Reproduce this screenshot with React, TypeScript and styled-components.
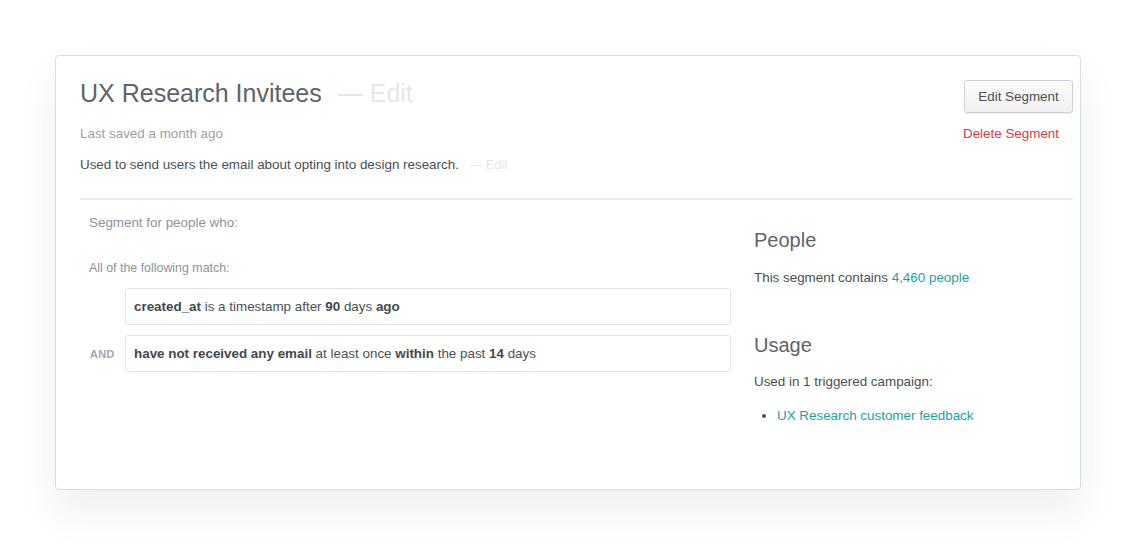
import React from "react";
import styled, { createGlobalStyle } from "styled-components";

const Global = createGlobalStyle`
  html, body { margin: 0; padding: 0; background: #ffffff; }
  body { font-family: "Liberation Sans", Arial, sans-serif; -webkit-font-smoothing: antialiased; }
  * { box-sizing: border-box; }
`;

const Page = styled.div`
  padding: 55px 55px 55px 55px;
`;

const Card = styled.div`
  background: #fff;
  border: 1px solid #d2dfec;
  border-radius: 4px;
  box-shadow: 0 22px 40px rgba(25, 35, 45, 0.075);
  padding: 24px 7px 63px 24px;
`;

const Header = styled.div`
  display: flex;
  justify-content: space-between;
  align-items: flex-start;
  padding-bottom: 23px;
  border-bottom: 2px solid #ebebeb;
`;

const TitleBlock = styled.div`
  display: flex;
  flex-direction: column;
`;

const Title = styled.h1`
  margin: 0;
  font-size: 25px;
  line-height: 26px;
  font-weight: 300;
  color: #5e6469;
`;

const EditHint = styled.span<{ $size: number; $gap: number }>`
  color: #e5e7e9;
  font-size: ${(p) => p.$size}px;
  margin-left: ${(p) => p.$gap}px;
  font-weight: 300;
`;

const Meta = styled.div`
  margin-top: 18px;
  font-size: 13.4px;
  line-height: 20px;
  color: #9a9fa4;
`;

const Description = styled.div`
  margin-top: 11px;
  font-size: 13.4px;
  line-height: 20px;
  color: #4a4f54;
`;

const Actions = styled.div`
  display: flex;
  flex-direction: column;
  align-items: flex-end;
`;

const Button = styled.button`
  width: 109px;
  height: 33px;
  border: 1px solid #cfd1d3;
  border-radius: 3px;
  background: linear-gradient(#fbfbfb, #f1f1f1);
  box-shadow: 0 1px 1px rgba(0, 0, 0, 0.08);
  font-family: inherit;
  font-size: 13.4px;
  color: #4a4f55;
  padding: 0;
  cursor: pointer;
`;

const DangerLink = styled.a`
  margin-top: 11px;
  margin-right: 14px;
  font-size: 13.4px;
  line-height: 20px;
  color: #e4383c;
  text-decoration: none;
`;

const Body = styled.div`
  display: grid;
  grid-template-columns: 651px 1fr;
  column-gap: 23px;
`;

const LeftCol = styled.div`
  padding-top: 13px;
`;

const SectionLabel = styled.div`
  padding-left: 9px;
  font-size: 13.4px;
  line-height: 20px;
  color: #8d9399;
`;

const MatchLabel = styled.div`
  margin-top: 26px;
  padding-left: 9px;
  font-size: 12.4px;
  line-height: 18px;
  color: #8d9399;
`;

const Conditions = styled.div`
  margin-top: 11px;
  display: flex;
  flex-direction: column;
  gap: 10px;
`;

const ConditionRow = styled.div`
  display: grid;
  grid-template-columns: 45px 1fr;
  align-items: center;
`;

const Joiner = styled.span`
  padding-left: 10px;
  font-size: 11px;
  font-weight: 700;
  color: #a3a8ad;
  letter-spacing: 0.2px;
`;

const ConditionBox = styled.div`
  height: 37px;
  display: flex;
  align-items: center;
  padding-left: 8px;
  border: 1px solid #e2e4e6;
  border-radius: 3px;
  font-size: 13.4px;
  color: #4a4f55;
  b { font-weight: 700; color: #43484d; }
`;

const RightCol = styled.div`
  padding-top: 28px;
`;

const Heading = styled.h2<{ $top?: number }>`
  margin: ${(p) => p.$top ?? 0}px 0 0;
  font-size: 20px;
  line-height: 24px;
  font-weight: 300;
  color: #5e6469;
`;

const Text = styled.p<{ $top: number }>`
  margin: ${(p) => p.$top}px 0 0;
  font-size: 13.4px;
  line-height: 20px;
  color: #4a4f54;
`;

const TealLink = styled.a`
  color: #17a3a6;
  text-decoration: none;
`;

const List = styled.ul`
  margin: 14px 0 0;
  padding-left: 23px;
  font-size: 13.4px;
  line-height: 20px;
  color: #4a4f54;
`;

export default function App() {
  return (
    <>
      <Global />
      <Page>
        <Card>
          <Header>
            <TitleBlock>
              <Title>
                UX Research Invitees
                <EditHint $size={25} $gap={16}>— Edit</EditHint>
              </Title>
              <Meta>Last saved a month ago</Meta>
              <Description>
                Used to send users the email about opting into design research.
                <EditHint $size={12.5} $gap={11}>— Edit</EditHint>
              </Description>
            </TitleBlock>
            <Actions>
              <Button>Edit Segment</Button>
              <DangerLink href="#">Delete Segment</DangerLink>
            </Actions>
          </Header>
          <Body>
            <LeftCol>
              <SectionLabel>Segment for people who:</SectionLabel>
              <MatchLabel>All of the following match:</MatchLabel>
              <Conditions>
                <ConditionRow>
                  <span />
                  <ConditionBox>
                    <span>
                      <b>created_at</b> is a timestamp after <b>90</b> days <b>ago</b>
                    </span>
                  </ConditionBox>
                </ConditionRow>
                <ConditionRow>
                  <Joiner>AND</Joiner>
                  <ConditionBox>
                    <span>
                      <b>have not received any email</b> at least once <b>within</b> the past <b>14</b> days
                    </span>
                  </ConditionBox>
                </ConditionRow>
              </Conditions>
            </LeftCol>
            <RightCol>
              <Heading>People</Heading>
              <Text $top={16}>
                This segment contains <TealLink href="#">4,460 people</TealLink>
              </Text>
              <Heading $top={45}>Usage</Heading>
              <Text $top={15}>Used in 1 triggered campaign:</Text>
              <List>
                <li>
                  <TealLink href="#">UX Research customer feedback</TealLink>
                </li>
              </List>
            </RightCol>
          </Body>
        </Card>
      </Page>
    </>
  );
}
